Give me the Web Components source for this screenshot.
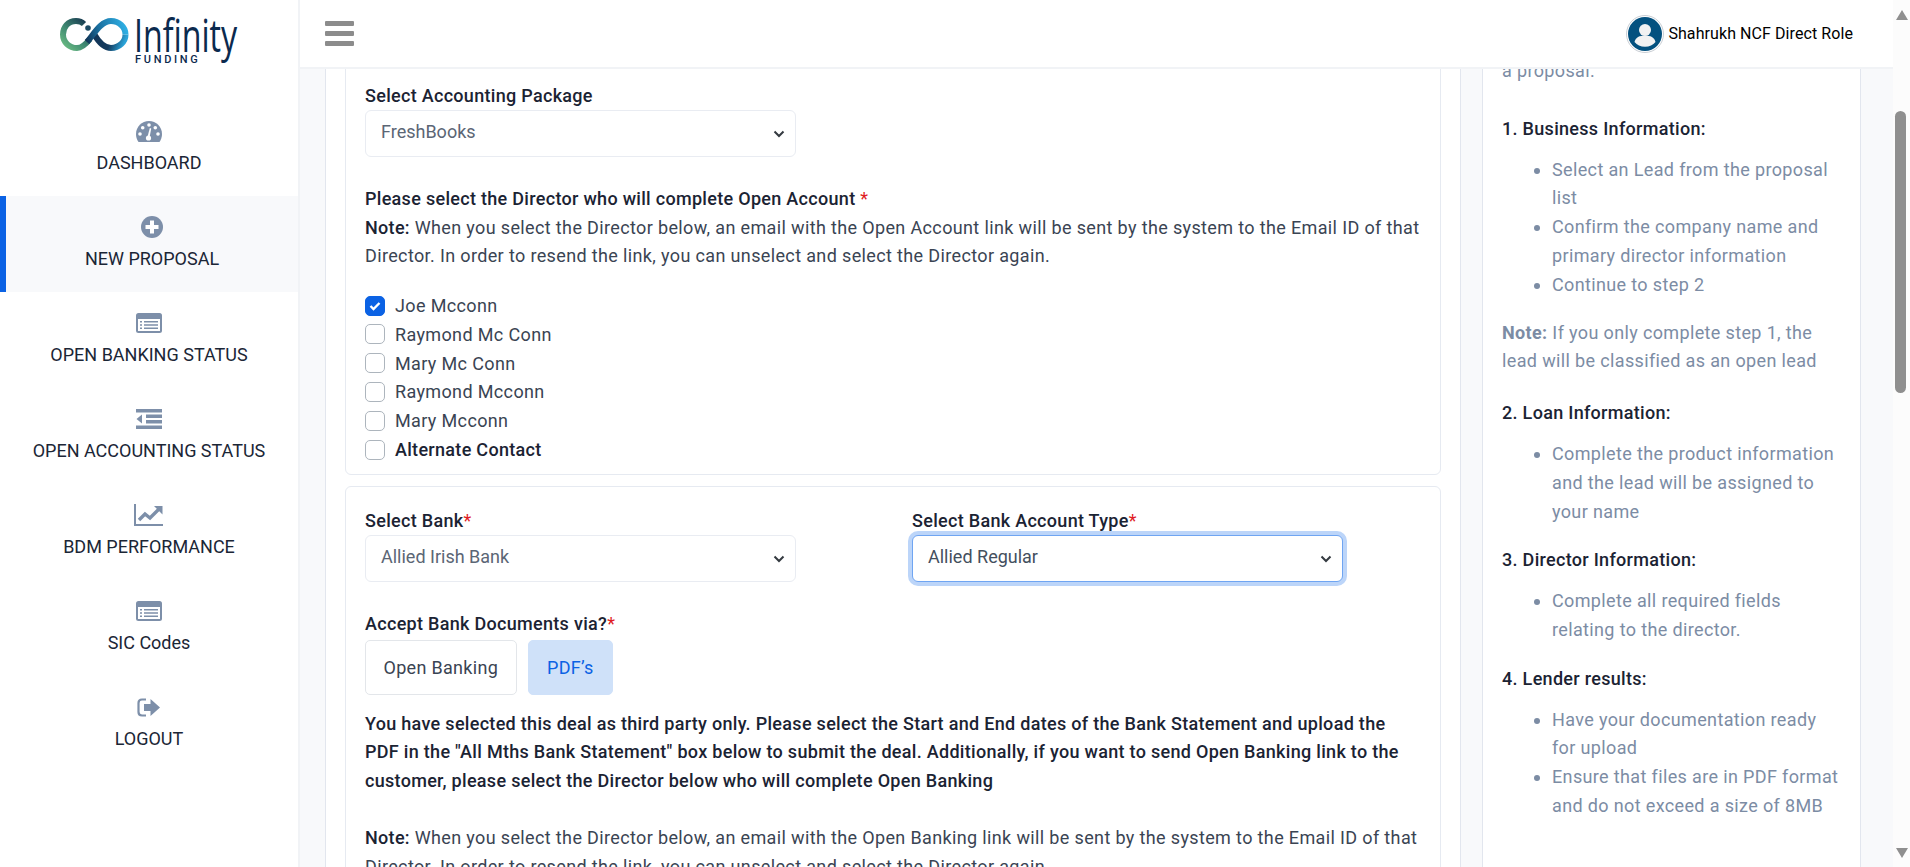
<!DOCTYPE html>
<html lang="en">
<head>
<meta charset="utf-8">
<title>New Proposal</title>
<style>
  html, body { margin: 0; height: 867px; overflow: hidden; background: #fff; }
  body { font-family: Roboto, "Liberation Sans", sans-serif; font-size: 18px; letter-spacing: .36px; }
  app-shell svg { display: block; }
</style>
</head>
<body>
<app-shell>
  <app-sidebar slot="sidebar">
    <nav-item label="DASHBOARD">
      <svg width="26" height="21" viewBox="0 0 26 21"><path fill="#7d8fa9" d="M13 0C5.8 0 0 5.8 0 13c0 2.9.9 5.700 2.500 8h21c1.600-2.300 2.500-5.100 2.500-8C26 5.800 20.200 0 13 0z"/><g fill="#fff"><circle cx="13" cy="4" r="1.800"/><circle cx="6.700" cy="6.700" r="1.800"/><circle cx="19.300" cy="6.700" r="1.800"/><circle cx="4" cy="13" r="1.800"/><circle cx="22" cy="13" r="1.800"/><circle cx="12.500" cy="17" r="2.600"/><path d="M11.500 16l2.300-9 1.400.4-1.700 9.100z"/></g></svg>
    </nav-item>
    <nav-item label="NEW PROPOSAL" active>
      <svg width="22" height="22" viewBox="0 0 22 22"><circle cx="11" cy="11" r="11" fill="#7d8fa9"/><path fill="#fff" d="M9 4.500h4V9h4.500v4H13v4.500H9V13H4.500V9H9z"/></svg>
    </nav-item>
    <nav-item label="OPEN BANKING STATUS"><list-icon></list-icon></nav-item>
    <nav-item label="OPEN ACCOUNTING STATUS">
      <svg width="26" height="20" viewBox="0 0 26 20"><path fill="#7d8fa9" d="M0 0h26v3.500H0zM10 5.500h16V9H10zM10 11h16v3.500H10zM0 16.500h26V20H0zM6 5.500v9L0.500 10z"/></svg>
    </nav-item>
    <nav-item label="BDM PERFORMANCE">
      <svg width="30" height="22" viewBox="0 0 30 22"><path fill="#7d8fa9" d="M0 0h2v20h27v2H0z"/><path fill="none" stroke="#7d8fa9" stroke-width="3.400" d="M5 16l6-6 5 4 9-9"/><path fill="#7d8fa9" d="M20 2h8.500v8.500z"/></svg>
    </nav-item>
    <nav-item label="SIC Codes"><list-icon></list-icon></nav-item>
    <nav-item label="LOGOUT">
      <svg width="24" height="19" viewBox="0 0 24 19"><path fill="none" stroke="#7d8fa9" stroke-width="2.200" d="M9 1.500H5C2.800 1.500 1.500 3 1.500 5v9c0 2 1.300 3.500 3.500 3.500h4"/><path fill="#7d8fa9" d="M7 6h6.500V1L23 9.500 13.500 18v-5H7z"/></svg>
    </nav-item>
  </app-sidebar>

  <app-header slot="header" user="Shahrukh NCF Direct Role"></app-header>

  <form-panel slot="form">
    <form-card class="first">
      <field-label>Select Accounting Package</field-label>
      <form-select>FreshBooks</form-select>
      <text-block style="margin-top:28px">
        <b>Please select the Director who will complete Open Account <span class="req">*</span></b><br>
        <b>Note:</b> When you select the Director below, an email with the Open Account link will be sent by the system to the Email ID of that Director. In order to resend the link, you can unselect and select the Director again.
      </text-block>
      <div class="checks">
        <check-row checked>Joe Mcconn</check-row>
        <check-row>Raymond Mc Conn</check-row>
        <check-row>Mary Mc Conn</check-row>
        <check-row>Raymond Mcconn</check-row>
        <check-row>Mary Mcconn</check-row>
        <check-row><b>Alternate Contact</b></check-row>
      </div>
    </form-card>
    <form-card class="second">
      <div class="two">
        <div><field-label>Select Bank<span class="req">*</span></field-label><form-select>Allied Irish Bank</form-select></div>
        <div><field-label>Select Bank Account Type<span class="req">*</span></field-label><form-select focused>Allied Regular</form-select></div>
      </div>
      <field-label style="margin-top:28px">Accept Bank Documents via?<span class="req">*</span></field-label>
      <div class="toggles">
        <toggle-button>Open Banking</toggle-button>
        <toggle-button selected>PDF’s</toggle-button>
      </div>
      <text-block style="margin-top:15px">
        <b>You have selected this deal as third party only. Please select the Start and End dates of the Bank Statement and upload the PDF in the "All Mths Bank Statement" box below to submit the deal. Additionally, if you want to send Open Banking link to the customer, please select the Director below who will complete Open Banking</b>
      </text-block>
      <text-block style="margin-top:28px">
        <b>Note:</b> When you select the Director below, an email with the Open Banking link will be sent by the system to the Email ID of that Director. In order to resend the link, you can unselect and select the Director again.
      </text-block>
    </form-card>
  </form-panel>

  <help-panel slot="help">
    <p style="margin-bottom:29px">a proposal.</p>
    <h4>1. Business Information:</h4>
    <ul>
      <li>Select an Lead from the proposal list</li>
      <li>Confirm the company name and primary director information</li>
      <li>Continue to step 2</li>
    </ul>
    <p style="margin-top:-1px"><b>Note:</b> If you only complete step 1, the lead will be classified as an open lead</p>
    <h4>2. Loan Information:</h4>
    <ul>
      <li>Complete the product information and the lead will be assigned to your name</li>
    </ul>
    <h4>3. Director Information:</h4>
    <ul>
      <li>Complete all required fields relating to the director.</li>
    </ul>
    <h4>4. Lender results:</h4>
    <ul>
      <li>Have your documentation ready for upload</li>
      <li>Ensure that files are in PDF format and do not exceed a size of 8MB</li>
    </ul>
  </help-panel>

  <page-scrollbar slot="scroll"></page-scrollbar>
</app-shell>

<script>
function shadow(el, html) {
  el.attachShadow({ mode: 'open' }).innerHTML = html;
}

class AppShell extends HTMLElement {
  constructor() {
    super();
    shadow(this, `
      <style>
        :host { display: grid; grid-template-columns: 298px 2px 1fr 17px; grid-template-rows: 67px 2px 798px; height: 867px; }
        .side { grid-column: 1; grid-row: 1 / 4; }
        .line { grid-column: 2; grid-row: 1 / 4; background: #f1f3f6; }
        .head { grid-column: 3; grid-row: 1; }
        .hline { grid-column: 3; grid-row: 2; background: #f1f3f6; }
        .body { grid-column: 3; grid-row: 3; display: flex; gap: 21px; padding: 0 32px 0 25px; background: #f8f9fb; overflow: hidden; }
        .scroll { grid-column: 4; grid-row: 1 / 4; }
      </style>
      <div class="side"><slot name="sidebar"></slot></div>
      <div class="line"></div>
      <div class="head"><slot name="header"></slot></div>
      <div class="hline"></div>
      <div class="body"><slot name="form"></slot><slot name="help"></slot></div>
      <div class="scroll"><slot name="scroll"></slot></div>`);
  }
}

class AppSidebar extends HTMLElement {
  constructor() {
    super();
    shadow(this, `
      <style>
        :host { display: block; height: 867px; background: #fff; }
        .logo { height: 100px; position: relative; }
        .logo svg { position: absolute; left: 59px; top: 17px; }
        .name { position: absolute; left: 134px; top: 16px; font: 400 46px/36px "Open Sans", sans-serif; letter-spacing: 0; color: #0b2a4e; transform: scaleX(.7); transform-origin: left top; white-space: nowrap; }
        .sub { position: absolute; left: 135px; top: 53px; font: 500 11px/13px Roboto, sans-serif; letter-spacing: 2.700px; color: #0b2a4e; }
      </style>
      <div class="logo">
        <svg width="72" height="38" viewBox="59 17 72 38" fill="none">
          <defs>
            <linearGradient id="a" gradientUnits="userSpaceOnUse" x1="62" y1="48" x2="88" y2="20"><stop offset="0" stop-color="#6fc184"/><stop offset=".45" stop-color="#3f8a72"/><stop offset="1" stop-color="#14314d"/></linearGradient>
            <linearGradient id="b" gradientUnits="userSpaceOnUse" x1="84" y1="40" x2="126" y2="28"><stop offset="0" stop-color="#0f2c4d"/><stop offset=".4" stop-color="#1a6f9f"/><stop offset="1" stop-color="#2eaee3"/></linearGradient>
            <linearGradient id="c" gradientUnits="userSpaceOnUse" x1="92" y1="32" x2="124" y2="44"><stop offset="0" stop-color="#123456"/><stop offset=".6" stop-color="#133a5e"/><stop offset="1" stop-color="#2aa3d8"/></linearGradient>
          </defs>
          <path stroke="url(#c)" stroke-width="6" d="M94 34C98 41 103 48 111 48C119 48 125.500 42 125.500 34.500"/>
          <path stroke="url(#a)" stroke-width="6" d="M84 24C82 22 79 21 76 21C68 21 63 27 63 34.500C63 42 69 48 77 48C82 48 86 44 90 39"/>
          <path stroke="url(#b)" stroke-width="6" d="M87 42C94 34 101 21 111 21C119 21 125.500 27 125.500 34.500"/>
          <circle cx="88" cy="28" r="2.800" fill="#1c4a63"/>
        </svg>
        <span class="name">Infinity</span>
        <span class="sub">FUNDING</span>
      </div>
      <slot></slot>`);
  }
}

class NavItem extends HTMLElement {
  constructor() {
    super();
    shadow(this, `
      <style>
        :host { display: flex; flex-direction: column; align-items: center; height: 96px; box-sizing: border-box; color: #1b2636; font-size: 18px; letter-spacing: 0; }
        :host([active]) { background: #f8f9fb; box-shadow: inset 6px 0 0 #0b62e4; padding-left: 6px; }
        .icon { height: 22px; margin: 20px 0 7px; width: 100%; display: flex; align-items: center; justify-content: center; }
        .label { line-height: 28px; white-space: nowrap; }
      </style>
      <div class="icon"><slot></slot></div>
      <div class="label">${this.getAttribute('label')}</div>`);
  }
}

class ListIcon extends HTMLElement {
  constructor() {
    super();
    shadow(this, `
      <style>:host { display: block; } svg { display: block; }</style>
      <svg width="26" height="20" viewBox="0 0 26 20">
        <rect width="26" height="20" rx="2.500" fill="#7d8fa9"/>
        <rect x="2" y="6" width="22" height="12" fill="#fff"/>
        <path fill="#7d8fa9" d="M4 8h2v1.500H4zM8 8h14v1.500H8zM4 11.300h2v1.500H4zM8 11.300h14v1.500H8zM4 14.500h2V16H4zM8 14.500h14V16H8z"/>
      </svg>`);
  }
}

class AppHeader extends HTMLElement {
  constructor() {
    super();
    shadow(this, `
      <style>
        :host { display: flex; align-items: center; justify-content: space-between; height: 67px; background: #fff; padding: 0 40px 0 25px; box-sizing: border-box; }
        .burger { display: flex; flex-direction: column; gap: 5px; width: 29px; }
        .burger i { display: block; height: 5px; background: #8c8c8c; border-radius: 1px; }
        .user { display: flex; align-items: center; gap: 4px; color: #000; font-size: 16px; letter-spacing: .08px; }
        .avatar { display: block; }
      </style>
      <div class="burger"><i></i><i></i><i></i></div>
      <div class="user">
        <svg class="avatar" width="38" height="38" viewBox="0 0 38 38">
          <circle cx="19" cy="19" r="18.500" fill="#fff" stroke="#c9ced4"/>
          <circle cx="19" cy="19" r="17" fill="#03517f"/>
          <circle cx="19" cy="15" r="6" fill="#f1f2f2"/>
          <path fill="#f1f2f2" d="M8.500 27c1-4.500 5-6.500 10.500-6.500s9.500 2 10.500 6.500c-2.500 3-6 4.700-10.500 4.700S11 30 8.500 27z"/>
        </svg>
        <span>${this.getAttribute('user')}</span>
      </div>`);
  }
}

class FormPanel extends HTMLElement {
  constructor() {
    super();
    shadow(this, `
      <style>
        :host { display: block; width: 1136px; height: 798px; box-sizing: border-box; background: #fff; border-left: 1px solid #e2e6ee; border-right: 1px solid #e2e6ee; padding-left: 19px; padding-right: 19px; overflow: hidden; flex: none; }
        ::slotted(form-card.first) { margin-top: -20px; padding-top: 32px; }
        ::slotted(form-card.second) { margin-top: 11px; }
      </style>
      <slot></slot>`);
    this.querySelectorAll('.req').forEach(s => { s.style.color = '#e01b24'; s.style.fontWeight = '400'; });
    this.querySelectorAll('.checks').forEach(c => { c.style.marginTop = '20px'; });
    this.querySelectorAll('.two').forEach(c => { c.style.cssText = 'display:grid;grid-template-columns:431px 431px;column-gap:116px'; });
    this.querySelectorAll('.toggles').forEach(c => { c.style.cssText = 'display:flex;gap:11px;margin-top:2px'; });
    this.querySelectorAll('.first > form-select').forEach(c => { c.style.width = '431px'; });
  }
}

class FormCard extends HTMLElement {
  constructor() {
    super();
    shadow(this, `
      <style>
        :host { display: block; box-sizing: border-box; border: 1px solid #e6eaf1; border-radius: 6px; padding: 20px 19px 10px; background: #fff; }
      </style>
      <slot></slot>`);
  }
}

class FieldLabel extends HTMLElement {
  constructor() {
    super();
    shadow(this, `
      <style>:host { display: block; font-weight: 500; letter-spacing: .3px; line-height: 28.800px; margin-bottom: -1px; color: #1b2333; }</style>
      <slot></slot>`);
  }
}

class FormSelect extends HTMLElement {
  constructor() {
    super();
    shadow(this, `
      <style>
        :host { display: flex; align-items: center; justify-content: space-between; box-sizing: border-box; height: 47px; padding: 0 10px 3px 15px; border: 1px solid #e9ecf2; border-radius: 6px; color: #5b6675; background: #fff; letter-spacing: 0; }
        :host([focused]) { border-color: #6fa5f2; box-shadow: 0 0 0 4px #bcd5f9; color: #444f5e; }
        svg { display: block; margin-top: 5px; }
      </style>
      <slot></slot>
      <svg width="12" height="8" viewBox="0 0 12 8"><path d="M1.500 1.500 6 6l4.500-4.500" fill="none" stroke="#343a40" stroke-width="2"/></svg>`);
  }
}

class TextBlock extends HTMLElement {
  constructor() {
    super();
    shadow(this, `
      <style>:host { display: block; line-height: 28.800px; color: #3a4453; }
      ::slotted(b) { font-weight: 500; letter-spacing: .3px; color: #1b2333; }</style>
      <slot></slot>`);
  }
}

class CheckRow extends HTMLElement {
  constructor() {
    super();
    shadow(this, `
      <style>
        :host { display: flex; align-items: center; gap: 10px; height: 28.800px; color: #3a4453; }
        ::slotted(b) { font-weight: 500; letter-spacing: .3px; color: #1b2333; }
        .box { width: 20px; height: 20px; box-sizing: border-box; border: 1px solid #adb5bd; border-radius: 5px; background: #fff; display: flex; align-items: center; justify-content: center; }
        :host([checked]) .box { background: #0b62e4; border-color: #0b62e4; }
        svg { display: none; }
        :host([checked]) svg { display: block; }
      </style>
      <div class="box"><svg width="12" height="10" viewBox="0 0 12 10"><path d="M1.500 5 4.500 8l6-6" fill="none" stroke="#fff" stroke-width="2.400"/></svg></div>
      <span><slot></slot></span>`);
  }
}

class ToggleButton extends HTMLElement {
  constructor() {
    super();
    shadow(this, `
      <style>
        :host { display: flex; align-items: center; height: 55px; box-sizing: border-box; padding: 0 17.500px; border: 1px solid #e3e6ea; border-radius: 5px; color: #3a4453; background: #fff; letter-spacing: .3px; }
        :host([selected]) { padding: 0 18.500px; background: #cfe1f9; border-color: #cfe1f9; color: #0b62e4; }
      </style>
      <slot></slot>`);
  }
}

class HelpPanel extends HTMLElement {
  constructor() {
    super();
    shadow(this, `
      <style>
        :host { display: block; width: 379px; height: 798px; box-sizing: border-box; background: #fff; border-left: 1px solid #e2e6ee; border-right: 1px solid #e2e6ee; padding: 0 19px 0 19px; flex: none; line-height: 28.800px; }
        ::slotted(p) { margin: 0 0 23px; color: #7c8ca4; }
        ::slotted(h4) { margin: 0 0 12px; font-size: 18px; font-weight: 500; letter-spacing: .3px; color: #1b2333; }
        ::slotted(ul) { margin: 0 0 20px; padding-left: 50px; color: #7c8ca4; }
        .wrap { margin-top: -12px; }
      </style>
      <div class="wrap"><slot></slot></div>`);
  }
}

class PageScrollbar extends HTMLElement {
  constructor() {
    super();
    shadow(this, `
      <style>
        :host { display: block; position: relative; height: 867px; background: #fcfcfc; }
        .thumb { position: absolute; left: 2px; top: 111px; width: 11px; height: 282px; background: #8f8f8f; border-radius: 6px; }
        svg { position: absolute; left: 3px; display: block; }
      </style>
      <svg style="top:10px" width="12" height="10" viewBox="0 0 12 10"><path d="M6 0l6 10H0z" fill="#8f8f8f"/></svg>
      <div class="thumb"></div>
      <svg style="top:848px" width="12" height="10" viewBox="0 0 12 10"><path d="M6 10l6-10H0z" fill="#8f8f8f"/></svg>`);
  }
}

customElements.define('app-shell', AppShell);
customElements.define('app-sidebar', AppSidebar);
customElements.define('nav-item', NavItem);
customElements.define('list-icon', ListIcon);
customElements.define('app-header', AppHeader);
customElements.define('form-panel', FormPanel);
customElements.define('form-card', FormCard);
customElements.define('field-label', FieldLabel);
customElements.define('form-select', FormSelect);
customElements.define('text-block', TextBlock);
customElements.define('check-row', CheckRow);
customElements.define('toggle-button', ToggleButton);
customElements.define('help-panel', HelpPanel);
customElements.define('page-scrollbar', PageScrollbar);
</script>
</body>
</html>
